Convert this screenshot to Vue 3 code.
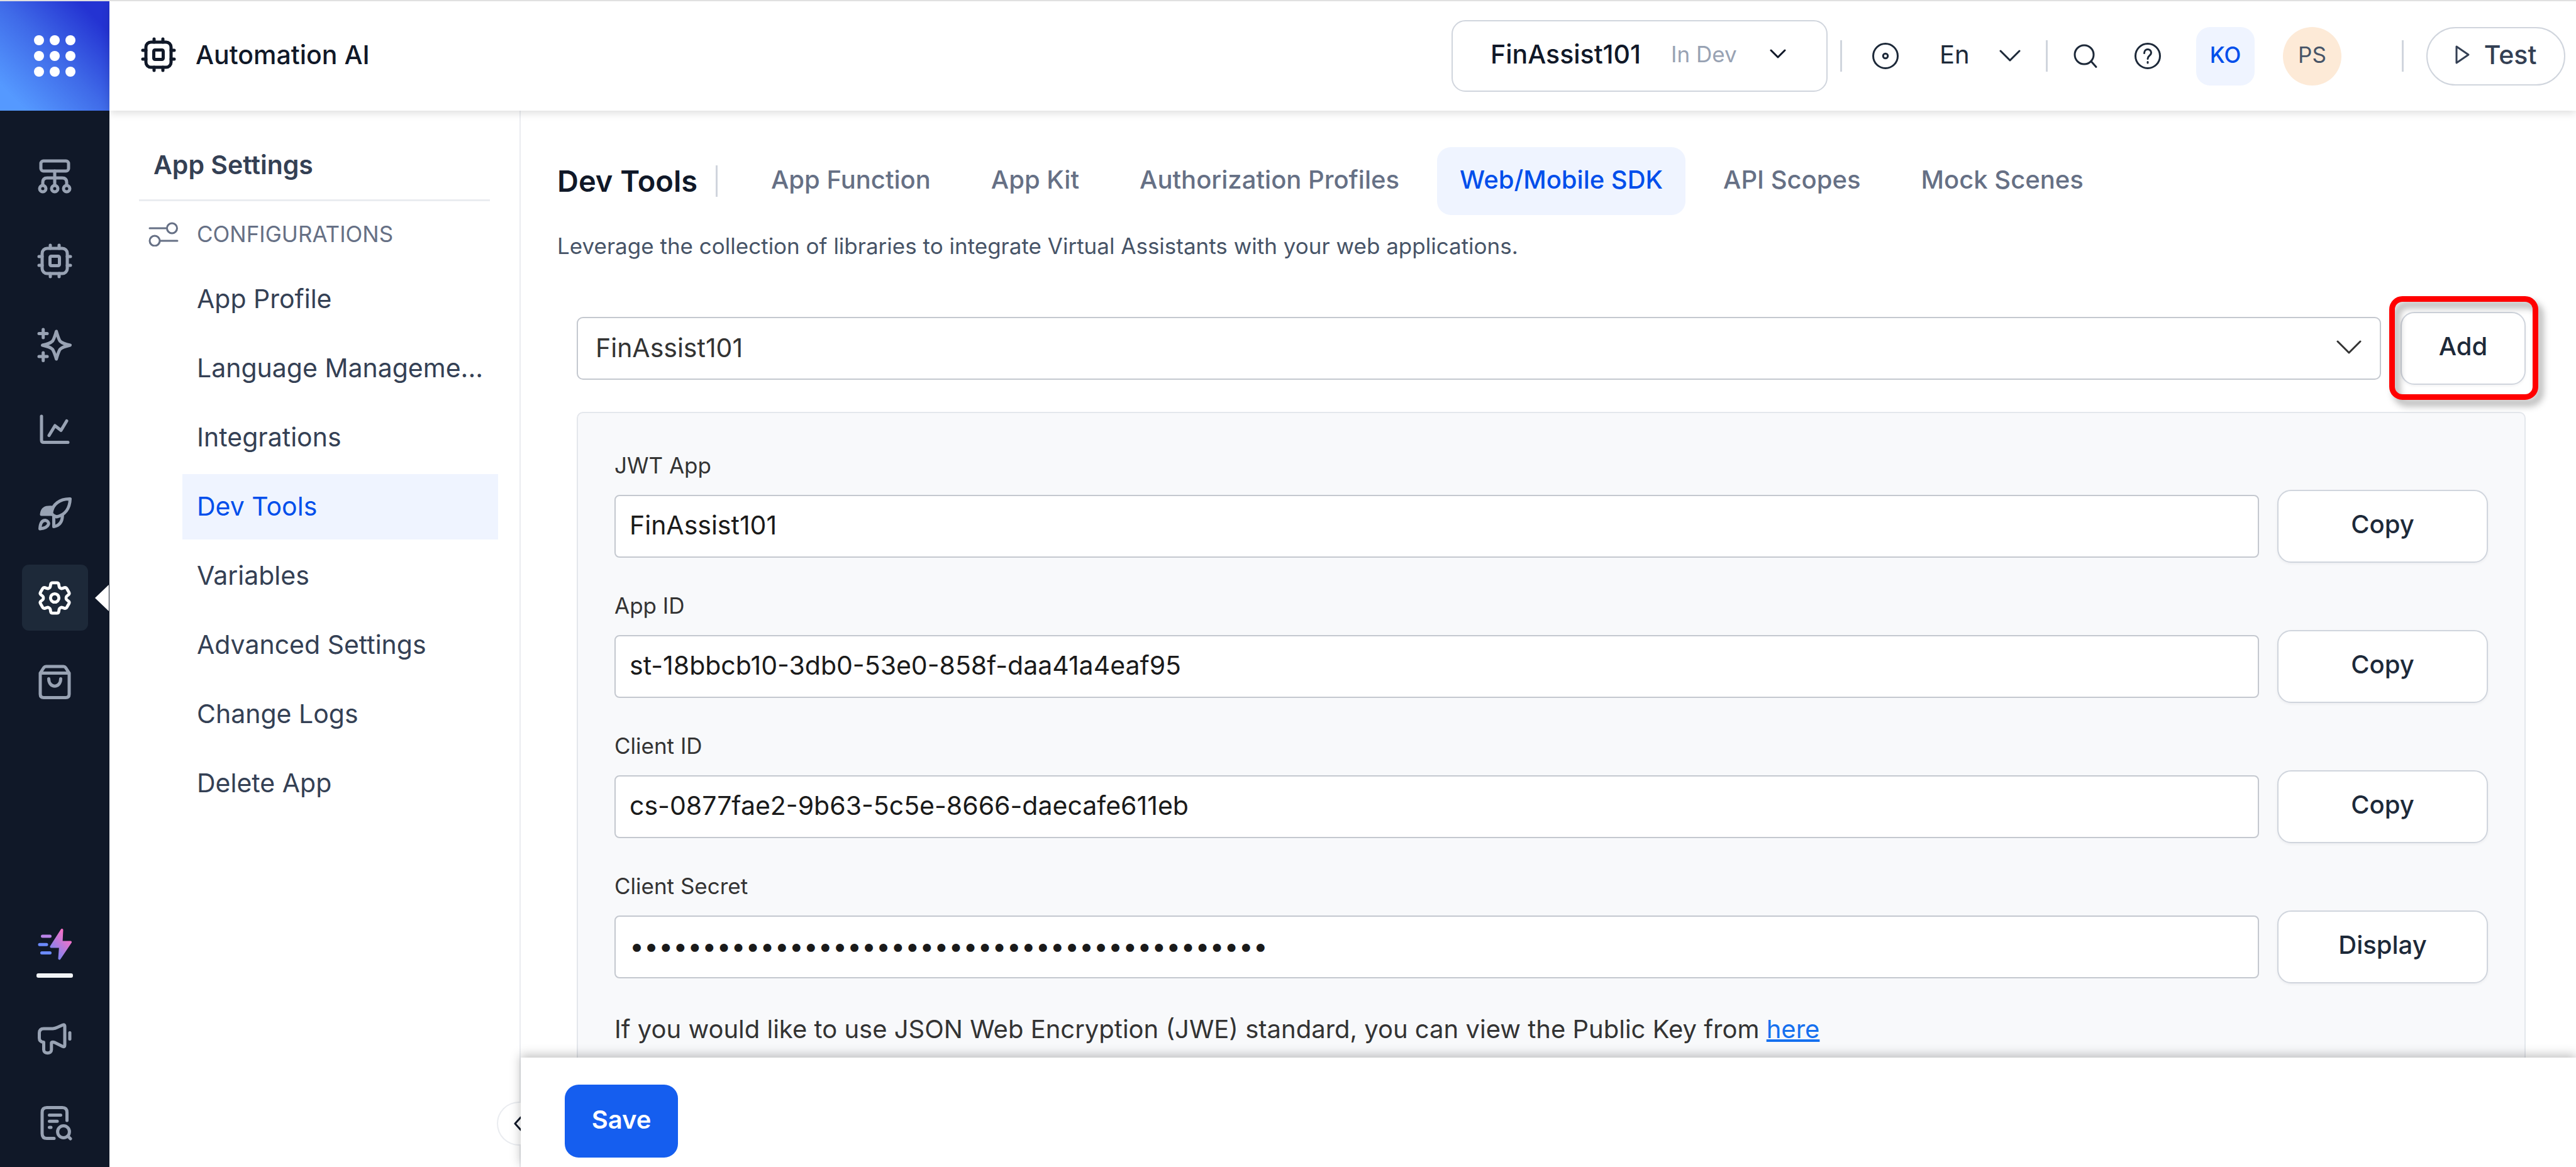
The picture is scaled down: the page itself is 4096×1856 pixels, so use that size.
<script setup>
import { ref } from 'vue'

const railItems = [
  { id: 'flows', label: 'Flows' },
  { id: 'chip', label: 'Automation' },
  { id: 'spark', label: 'Generative AI' },
  { id: 'chart', label: 'Analytics' },
  { id: 'rocket', label: 'Deploy' },
  { id: 'gear', label: 'App Settings' },
  { id: 'bag', label: 'Marketplace' },
]

const menu = [
  'App Profile',
  'Language Manageme...',
  'Integrations',
  'Dev Tools',
  'Variables',
  'Advanced Settings',
  'Change Logs',
  'Delete App',
]
const activeMenu = ref('Dev Tools')

const tabs = ['App Function', 'App Kit', 'Authorization Profiles', 'Web/Mobile SDK', 'API Scopes', 'Mock Scenes']
const activeTab = ref('Web/Mobile SDK')

const fields = ref([
  { id: 'jwt-app', label: 'JWT App', value: 'FinAssist101', type: 'text', action: 'Copy' },
  { id: 'app-id', label: 'App ID', value: 'st-18bbcb10-3db0-53e0-858f-daa41a4eaf95', type: 'text', action: 'Copy' },
  { id: 'client-id', label: 'Client ID', value: 'cs-0877fae2-9b63-5c5e-8666-daecafe611eb', type: 'text', action: 'Copy' },
  { id: 'client-secret', label: 'Client Secret', value: '0'.repeat(44), type: 'password', action: 'Display' },
])
</script>

<template>
  <div class="app">
    <aside class="rail">
      <button class="launcher" aria-label="Apps">
        <svg width="66" height="66" viewBox="0 0 66 66" fill="#fff">
          <template v-for="r in 3" :key="r">
            <circle v-for="c in 3" :key="c" :cx="c * 25 - 17" :cy="r * 25 - 17" r="8" />
          </template>
        </svg>
      </button>

      <nav class="rail-nav" aria-label="Main">
        <a
          v-for="item in railItems"
          :key="item.id"
          href="#"
          class="rail-item"
          :class="{ active: item.id === 'gear' }"
          :aria-label="item.label"
        >
          <svg v-if="item.id === 'flows'" class="glyph" viewBox="0 0 56 56">
            <rect x="6" y="3" width="44" height="16" rx="4" />
            <path d="M28 19V41M9 41V37Q9 30 16 30H40Q47 30 47 37V41" />
            <circle cx="9" cy="47" r="5" />
            <circle cx="28" cy="47" r="5" />
            <circle cx="47" cy="47" r="5" />
          </svg>
          <svg v-else-if="item.id === 'chip'" class="glyph" viewBox="0 0 56 56">
            <rect x="8" y="8" width="40" height="40" rx="8" />
            <rect x="20.500" y="20.500" width="15" height="15" rx="2" />
            <path d="M21 8V3M35 8V3M21 48V53M35 48V53M8 21H3M8 35H3M48 21H53M48 35H53" />
          </svg>
          <svg v-else-if="item.id === 'spark'" class="glyph" viewBox="0 0 56 56">
            <path d="M30.600 6C33 14 34 18 36.500 21.500C40 25 44 26 52.500 28C44 30 40 31 36.500 34.500C34 38 33 42 30.600 50C28 42 27 38 24.500 34.500C21 31 17 30 8.500 28C17 26 21 25 24.500 21.500C27 18 28 14 30.600 6Z" />
            <path d="M9.700 3V16M3 9.600H16M9.700 40V52.500M3 46H16" />
          </svg>
          <svg v-else-if="item.id === 'chart'" class="glyph" viewBox="0 0 56 56">
            <path d="M7 7V45Q7 48.500 10.500 48.500H49" />
            <path d="M19 37.500L28.400 22L38 29.500L47 14.500" />
          </svg>
          <svg v-else-if="item.id === 'rocket'" class="glyph" viewBox="0 0 56 56">
            <path d="M52.500 4.500C36 4 25 13 22.500 26Q24 31 31 33C44 30 52 20 52.500 4.500Z" />
            <path class="solid" d="M7 29C8 20 12 17 25 18L22 29Z" />
            <path d="M26.500 33V48.500C35 47 40 42 40.300 31" />
            <path d="M4.500 52C5 43 8 38.500 13 38.500C21 40 21 50 4.500 52Z" />
          </svg>
          <svg v-else-if="item.id === 'gear'" class="glyph" viewBox="1.550 1.550 20.900 20.900">
            <g stroke-width="1.800">
              <path d="M9.594 3.940c.09-.542.56-.94 1.110-.94h2.593c.55 0 1.020.398 1.110.94l.213 1.281c.063.374.313.686.645.87.074.04.147.083.22.127.325.196.72.257 1.075.124l1.217-.456a1.125 1.125 0 0 1 1.370.49l1.296 2.247a1.125 1.125 0 0 1-.26 1.431l-1.003.827c-.293.241-.438.613-.43.992a7.723 7.723 0 0 1 0 .255c-.008.378.137.75.43.991l1.004.827c.424.35.534.955.26 1.430l-1.298 2.247a1.125 1.125 0 0 1-1.369.491l-1.217-.456c-.355-.133-.75-.072-1.076.124a6.470 6.470 0 0 1-.22.128c-.331.183-.581.495-.644.869l-.213 1.281c-.09.543-.56.94-1.110.94h-2.594c-.55 0-1.019-.398-1.110-.94l-.213-1.281c-.062-.374-.312-.686-.644-.87a6.520 6.520 0 0 1-.22-.127c-.325-.196-.72-.257-1.076-.124l-1.217.456a1.125 1.125 0 0 1-1.369-.49l-1.297-2.247a1.125 1.125 0 0 1 .26-1.431l1.004-.827c.292-.24.437-.613.43-.991a6.932 6.932 0 0 1 0-.255c.007-.38-.138-.751-.43-.992l-1.004-.827a1.125 1.125 0 0 1-.26-1.430l1.297-2.247a1.125 1.125 0 0 1 1.370-.491l1.216.456c.356.133.751.072 1.076-.124.072-.044.146-.086.22-.128.332-.183.582-.495.644-.869l.214-1.280Z" />
              <circle cx="12" cy="12" r="2.500" />
            </g>
          </svg>
          <svg v-else class="glyph" viewBox="0 0 56 56">
            <path d="M5 13.500L10.500 5Q12 3 14 3H42Q44 3 45.500 5L51 13.500V47Q51 52.500 45.500 52.500H10.500Q5 52.500 5 47ZM5 13.500H51" />
            <path d="M18.500 22.500C18.500 38 37.500 38 37.500 22.500" />
          </svg>
        </a>
      </nav>

      <nav class="rail-bottom" aria-label="Shortcuts">
        <a href="#" class="boost" aria-label="Quick actions">
          <svg width="56" height="56" viewBox="0 0 56 56">
            <defs>
              <linearGradient id="boost-fill" gradientUnits="userSpaceOnUse" x1="10" y1="44" x2="48" y2="10">
                <stop offset="0" stop-color="#528bff" />
                <stop offset="1" stop-color="#ff6fc4" />
              </linearGradient>
            </defs>
            <path d="M39.500 5L22.500 31.500H37L35.500 50.500L53 24.500H38.500Z" fill="url(#boost-fill)" stroke="url(#boost-fill)" stroke-width="4" stroke-linejoin="round" />
            <path d="M4 28.200H15M7.500 41.500H20.500" fill="none" stroke="#6b8aff" stroke-width="5" stroke-linecap="round" />
            <path d="M8.500 15H20.500" fill="none" stroke="#b983e8" stroke-width="5" stroke-linecap="round" />
          </svg>
          <span class="underline"></span>
        </a>
        <a href="#" class="rail-item" aria-label="Announcements">
          <svg class="glyph" viewBox="0 0 56 56">
            <path d="M10.500 12H25Q29 11.500 32 10L41 6Q44 5 44 8V38Q44 41.500 41 40.500L28 34Q23 32.500 22.800 34.500V45.500C22.800 52.500 10.500 52.500 10.500 45.500V33.500Q3.500 33 3.500 27V19Q3.500 12 10.500 12Z" />
            <path d="M52 18.500V28.500" />
          </svg>
        </a>
        <a href="#" class="rail-item" aria-label="Logs">
          <svg class="glyph" viewBox="0 0 56 56">
            <path d="M47.500 24V11Q47.500 3.500 40 3.500H15.500Q8 3.500 8 11V45Q8 52.500 15.500 52.500H27M19.500 15.500H37.500M19.500 25.200H32M19.500 35H22" />
            <circle cx="42" cy="42" r="9.400" />
            <path d="M49 49L53 53" />
          </svg>
        </a>
      </nav>
    </aside>

    <div class="shell">
      <header class="topbar">
        <div class="brand">
          <svg class="brand-icon" viewBox="0 0 56 56">
            <rect x="8" y="8" width="40" height="40" rx="8" />
            <rect x="20.500" y="20.500" width="15" height="15" rx="2" />
            <path d="M21 8V3M35 8V3M21 48V53M35 48V53M8 21H3M8 35H3M48 21H53M48 35H53" />
          </svg>
          <span>Automation AI</span>
        </div>

        <div class="tools">
          <button class="app-picker" aria-haspopup="listbox">
            <span class="app-name">FinAssist101</span>
            <span class="app-state">In Dev</span>
            <svg class="caret" width="26" height="16" viewBox="0 0 26 16"><path d="M2 2L13 13L24 2" /></svg>
          </button>
          <span class="bar bar-a"></span>
          <button class="tool tool-eye" aria-label="Preview">
            <svg width="44" height="44" viewBox="0 0 44 44"><circle cx="22" cy="22" r="19.500" /><circle cx="22" cy="22" r="3.800" /></svg>
          </button>
          <label class="lang">
            <select aria-label="Language">
              <option>En</option>
            </select>
            <svg width="34" height="20" viewBox="0 0 34 20"><path d="M2 2L17 17L32 2" /></svg>
          </label>
          <span class="bar bar-b"></span>
          <button class="tool tool-search" aria-label="Search">
            <svg width="40" height="40" viewBox="0 0 40 40"><circle cx="18" cy="18" r="15" /><path d="M29 28.500L37 37.500" /></svg>
          </button>
          <button class="tool tool-help" aria-label="Help">
            <svg width="44" height="44" viewBox="0 0 44 44">
              <circle cx="22" cy="22" r="19.500" />
              <path d="M16.500 17.500C16.500 9.500 27.500 9.500 27.500 17C27.500 21.500 22 21.500 22 26.500" />
              <path d="M22 31.500V33" />
            </svg>
          </button>
          <button class="org">KO</button>
          <button class="user">PS</button>
          <span class="bar bar-c"></span>
          <button class="test">
            <svg width="24" height="32" viewBox="0 0 24 32"><path d="M2 3L21 16L2 29Z" /></svg>
            <span>Test</span>
          </button>
        </div>
      </header>

      <div class="body">
        <aside class="settings">
          <h2>App Settings</h2>
          <div class="section">
            <svg width="48" height="40" viewBox="0 0 48 40"><path d="M2 11H29M19 31H46" /><circle cx="37.500" cy="11" r="8" /><circle cx="10" cy="31" r="8" /></svg>
            <span>CONFIGURATIONS</span>
          </div>
          <nav class="menu" aria-label="App Settings">
            <a
              v-for="entry in menu"
              :key="entry"
              href="#"
              :class="{ active: entry === activeMenu }"
              @click.prevent="activeMenu = entry"
            >{{ entry }}</a>
          </nav>
          <button class="collapse" aria-label="Collapse panel">
            <svg width="14" height="24" viewBox="0 0 14 24"><path d="M12 2L3 12L12 22" /></svg>
          </button>
        </aside>

        <main class="main">
          <div class="content">
            <div class="heading">
              <h1>Dev Tools</h1>
              <span class="bar"></span>
              <nav class="tabs" aria-label="Dev Tools">
                <a
                  v-for="tab in tabs"
                  :key="tab"
                  href="#"
                  :class="{ active: tab === activeTab }"
                  @click.prevent="activeTab = tab"
                >{{ tab }}</a>
              </nav>
            </div>
            <p class="lead">Leverage the collection of libraries to integrate Virtual Assistants with your web applications.</p>

            <div class="chooser">
              <div class="select-box">
                <select aria-label="JWT application">
                  <option>FinAssist101</option>
                </select>
                <svg width="40" height="24" viewBox="0 0 40 24"><path d="M2 3L20 21L38 3" /></svg>
              </div>
              <div class="add-wrap">
                <button class="btn">Add</button>
                <span class="callout"></span>
              </div>
            </div>

            <section class="card">
              <div v-for="field in fields" :key="field.id" class="field">
                <label :for="field.id">{{ field.label }}</label>
                <div class="field-row">
                  <input :id="field.id" v-model="field.value" :type="field.type" />
                  <button class="btn">{{ field.action }}</button>
                </div>
              </div>
              <p class="note">If you would like to use JSON Web Encryption (JWE) standard, you can view the Public Key from <a href="#">here</a></p>
            </section>
          </div>

          <footer class="footer">
            <button class="save">Save</button>
          </footer>
        </main>
      </div>
    </div>
  </div>
</template>

<style>
body {
  background: #fff;
}
</style>

<style scoped>
* {
  box-sizing: border-box;
}

.app {
  display: flex;
  height: 100vh;
  overflow: hidden;
  border-top: 2px solid #e0e0e0;
  font-family: Inter, "Liberation Sans", sans-serif;
  font-size: 40px;
  line-height: 48px;
  color: #344054;
}

button,
input,
select {
  margin: 0;
  padding: 0;
  border: none;
  background: none;
  font: inherit;
  color: inherit;
  appearance: none;
}

a {
  color: inherit;
  text-decoration: none;
}

svg {
  display: block;
  flex: none;
  fill: none;
  stroke: currentColor;
  stroke-width: 3;
  stroke-linecap: round;
  stroke-linejoin: round;
}

/* Icon rail */
.rail {
  display: flex;
  flex-direction: column;
  flex: none;
  width: 174px;
  background: #101828;
  color: #98a2b3;
}

.launcher {
  display: grid;
  place-items: center;
  height: 174px;
  background: linear-gradient(45deg, #5599ff 12%, #3f6ae8 50%, #2433d2 86%);
}

.launcher svg {
  fill: #fff;
  stroke: none;
}

.rail-nav {
  display: flex;
  flex-direction: column;
  align-items: center;
  gap: 29px;
  padding-top: 52px;
}

.rail-item {
  position: relative;
  display: grid;
  place-items: center;
  width: 105px;
  height: 105px;
  border-radius: 11px;
}

.rail-item.active {
  background: #1d2939;
  color: #fff;
}

.rail-item.active::after {
  content: "";
  position: absolute;
  top: 32px;
  right: -33px;
  border: 21px solid transparent;
  border-left: none;
  border-right: 22px solid #fff;
}

.glyph {
  width: 56px;
  height: 56px;
  stroke-width: 5;
}

.solid {
  fill: currentColor;
}

.rail-bottom {
  display: flex;
  flex-direction: column;
  align-items: center;
  gap: 29px;
  margin-top: auto;
  padding-bottom: 18px;
}

.boost {
  display: flex;
  flex-direction: column;
  align-items: center;
  gap: 18px;
  padding-bottom: 15px;
}

.boost svg {
  stroke: none;
}

.underline {
  width: 58px;
  height: 7px;
  border-radius: 3px;
  background: #f2f4f7;
}

/* Top bar */
.shell {
  display: flex;
  flex-direction: column;
  flex: 1;
  min-width: 0;
}

.topbar {
  position: relative;
  z-index: 2;
  display: flex;
  align-items: center;
  justify-content: space-between;
  flex: none;
  height: 174px;
  padding: 0 17px 0 50px;
  background: #fff;
  box-shadow: 0 4px 12px rgba(0, 0, 0, 0.13);
}

.brand {
  display: flex;
  align-items: center;
  gap: 31px;
  padding-bottom: 5px;
  font-size: 41px;
  font-weight: 500;
  color: #101828;
}

.brand-icon {
  width: 56px;
  height: 56px;
  stroke-width: 5;
}

.tools {
  display: flex;
  align-items: center;
  color: #1d2939;
}

.app-picker {
  display: flex;
  align-items: center;
  width: 598px;
  height: 114px;
  padding: 0 64px 6px 60px;
  border: 2px solid #d0d5dd;
  border-radius: 22px;
  color: #101828;
}

.app-name {
  font-size: 41px;
  font-weight: 500;
}

.app-state {
  margin-left: 48px;
  font-size: 35px;
  color: #98a2b3;
}

.caret {
  margin-left: auto;
}

.bar {
  flex: none;
  width: 3px;
  height: 50px;
  background: #d0d5dd;
}

.bar-a {
  margin-left: 20px;
}

.bar-b,
.tool-search {
  margin-left: 40px;
}

.tool-eye {
  margin-left: 47px;
}

.lang {
  display: flex;
  align-items: center;
  gap: 47px;
  margin-left: 64px;
}

.lang select {
  padding-bottom: 5px;
}

.tool-help {
  margin-left: 57px;
}

.org,
.user {
  width: 93px;
  height: 93px;
  font-size: 35px;
  padding-bottom: 4px;
}

.org {
  margin-left: 55px;
  border-radius: 22px;
  background: #eff4ff;
  color: #004eeb;
  font-weight: 500;
}

.user {
  margin-left: 45px;
  border-radius: 50%;
  background: #fdead7;
  color: #475467;
}

.bar-c {
  margin-left: 96px;
}

.test {
  display: flex;
  align-items: center;
  justify-content: center;
  gap: 22px;
  width: 221px;
  height: 93px;
  margin-left: 36px;
  padding-bottom: 5px;
  border: 2px solid #d0d5dd;
  border-radius: 47px;
  font-size: 41px;
  font-weight: 500;
  color: #344054;
}

/* Settings panel */
.body {
  display: flex;
  flex: 1;
  min-height: 0;
}

.settings {
  position: relative;
  flex: none;
  width: 654px;
  border-right: 2px solid #eaecf0;
}

.settings h2 {
  margin: 0 47px;
  padding: 62px 0 31px 23px;
  border-bottom: 3px solid #eaecf0;
  font-size: 41px;
  font-weight: 600;
}

.section {
  display: flex;
  align-items: center;
  gap: 29px;
  height: 104px;
  padding-left: 62px;
  font-size: 35px;
  color: #667085;
}

.menu {
  display: flex;
  flex-direction: column;
  gap: 6px;
  margin: 0 34px 0 116px;
}

.menu a {
  height: 104px;
  padding: 27px 0 29px 23px;
  font-size: 41px;
  white-space: nowrap;
}

.menu a.active {
  background: #eff4ff;
  color: #004eeb;
}

.collapse {
  position: absolute;
  right: -2px;
  bottom: 34px;
  display: flex;
  align-items: center;
  width: 38px;
  height: 70px;
  padding-left: 24px;
  overflow: hidden;
  border: 2px solid #eaecf0;
  border-right: none;
  border-radius: 35px 0 0 35px;
  background: #fff;
  color: #101828;
}

/* Main area */
.main {
  display: flex;
  flex-direction: column;
  flex: 1;
  min-width: 0;
}

.content {
  flex: 1;
  min-height: 0;
  overflow: hidden;
  padding: 58px 80px 0 58px;
}

.heading {
  display: flex;
  align-items: center;
}

h1 {
  margin: 0;
  font-size: 47px;
  font-weight: 600;
  color: #101828;
}

.heading .bar {
  margin: 0 49px 0 29px;
}

.tabs {
  display: flex;
  gap: 24px;
  font-weight: 500;
  color: #667085;
}

.tabs a {
  padding: 28px 36px 32px;
  border-radius: 22px;
  white-space: nowrap;
}

.tabs a.active {
  background: #eff4ff;
  color: #004eeb;
}

.lead {
  margin: 25px 0 81px;
  font-size: 35px;
  color: #475467;
}

.chooser {
  display: flex;
  align-items: center;
  gap: 31px;
  margin-left: 31px;
}

.select-box {
  display: flex;
  position: relative;
  flex: 1;
}

.select-box select {
  width: 100%;
  height: 100px;
  padding: 0 28px 2px;
  border: 2px solid #c4c8cf;
  border-radius: 10px;
  font-size: 41px;
  color: #333;
}

.select-box svg {
  position: absolute;
  top: 36px;
  right: 31px;
  color: #333;
  pointer-events: none;
}

.add-wrap {
  display: flex;
  position: relative;
}

.add-wrap .btn {
  width: 199px;
}

.callout {
  position: absolute;
  inset: -25px -20px -24px -18px;
  border: 9px solid #f00;
  border-radius: 21px;
  filter: drop-shadow(7px 9px 6px rgba(0, 0, 0, 0.35));
  pointer-events: none;
}

.btn {
  flex: none;
  width: 335px;
  height: 116px;
  padding-bottom: 7px;
  border: 2px solid #d0d5dd;
  border-radius: 22px;
  background: #fff;
  box-shadow: 0 2px 4px rgba(16, 24, 40, 0.05);
  font-weight: 500;
  color: #1d2939;
}

.card {
  display: flex;
  flex-direction: column;
  gap: 44px;
  margin: 43px 0 0 31px;
  padding: 59px 58px;
  border: 2px solid #e4e7ec;
  border-radius: 10px;
  background: #f8f9fb;
}

.field {
  display: flex;
  flex-direction: column;
  gap: 15px;
}

.field label {
  font-size: 35px;
  color: #333;
}

.field-row {
  display: flex;
  align-items: center;
  gap: 29px;
}

.field-row input {
  flex: 1;
  min-width: 0;
  height: 100px;
  padding: 0 22px 4px;
  border: 2px solid #c4c8cf;
  border-radius: 8px;
  background: #fff;
  font-size: 41px;
  color: #1a1a1a;
}

.note {
  margin: 0;
  padding-top: 5px;
  color: #333;
}

.note a {
  color: #1570ef;
  text-decoration: underline;
}

.footer {
  position: relative;
  flex: none;
  padding: 43px 70px 15px;
  background: #fff;
  box-shadow: 0 -4px 16px rgba(0, 0, 0, 0.25);
}

.save {
  width: 180px;
  height: 116px;
  padding-bottom: 4px;
  border-radius: 22px;
  background: #155eef;
  font-weight: 600;
  color: #fff;
}
</style>
